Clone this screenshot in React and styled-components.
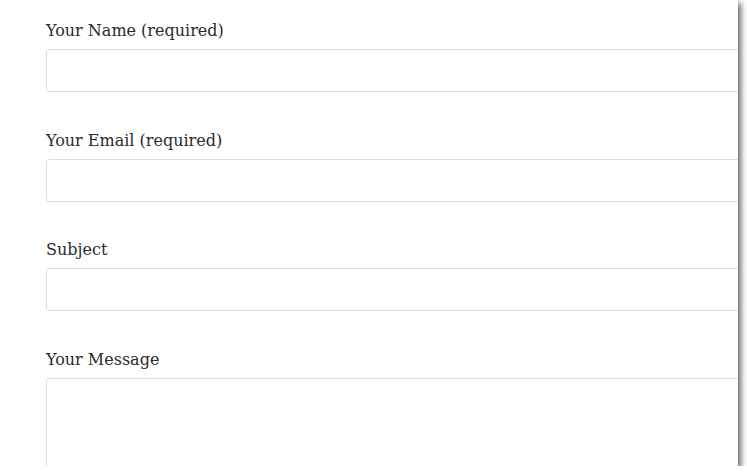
import React from 'react';
import styled, {createGlobalStyle} from 'styled-components';

const GlobalStyle = createGlobalStyle`
  html, body {
    margin: 0;
    padding: 0;
    background: #fff;
  }
`;

const Panel = styled.div`
  width: 738px;
  height: 466px;
  background: #fff;
  overflow: hidden;
  box-shadow: 3px 3px 6px rgba(0, 0, 0, 0.6);
  box-sizing: border-box;
  padding: 19px 0 0 46px;
`;

const Form = styled.form`
  width: 760px;
  display: flex;
  flex-direction: column;
`;

const Field = styled.div`
  display: flex;
  flex-direction: column;
  gap: 6px;
  margin-bottom: 36.7px;
`;

const Label = styled.label`
  font-family: 'DejaVu Serif', Georgia, serif;
  font-size: 16px;
  line-height: 24px;
  color: #2b2b2b;
`;

const Input = styled.input`
  box-sizing: border-box;
  width: 100%;
  height: 43px;
  border: 1px solid #ddd;
  border-radius: 3px;
  background: #fff;
  padding: 8px 10px;
  font-size: 15px;
  outline: none;
`;

const TextArea = styled.textarea`
  box-sizing: border-box;
  width: 100%;
  height: 160px;
  border: 1px solid #ddd;
  border-radius: 3px;
  background: #fff;
  padding: 8px 10px;
  resize: none;
  outline: none;
`;

const fields = [
  {id: 'name', label: 'Your Name (required)'},
  {id: 'email', label: 'Your Email (required)'},
  {id: 'subject', label: 'Subject'},
];

function App() {
  return (
    <>
      <GlobalStyle />
      <Panel>
        <Form>
          {fields.map((f) => (
            <Field key={f.id}>
              <Label htmlFor={f.id}>{f.label}</Label>
              <Input id={f.id} type="text" />
            </Field>
          ))}
          <Field>
            <Label htmlFor="message">Your Message</Label>
            <TextArea id="message" />
          </Field>
        </Form>
      </Panel>
    </>
  );
}

export default App;
